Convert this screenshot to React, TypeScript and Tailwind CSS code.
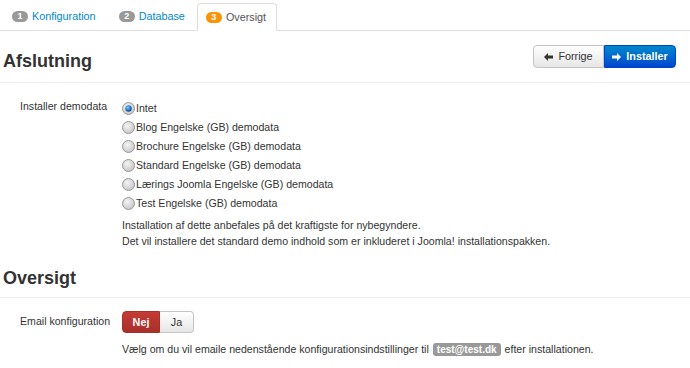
import React from "react";

const font = { fontFamily: '"Liberation Sans", Arial, sans-serif' };

function Radio({ checked }: { checked?: boolean }) {
  return (
    <svg width="13" height="13" viewBox="0 0 13 13" className="shrink-0">
      <defs>
        <radialGradient id={checked ? "rc" : "ru"} cx="0.4" cy="0.35" r="0.7">
          <stop offset="0" stopColor="#f4f4f4" />
          <stop offset="1" stopColor="#c4c4c4" />
        </radialGradient>
        <radialGradient id="dot" cx="0.4" cy="0.35" r="0.7">
          <stop offset="0" stopColor="#7fd0ff" />
          <stop offset="0.6" stopColor="#1f76c2" />
          <stop offset="1" stopColor="#0b3f7a" />
        </radialGradient>
      </defs>
      <circle cx="6.5" cy="6.5" r="6" fill={checked ? "url(#rc)" : "url(#ru)"} stroke="#999999" />
      {checked && <circle cx="6.5" cy="6.5" r="3.2" fill="url(#dot)" />}
    </svg>
  );
}

function Arrow({ dir, color }: { dir: "left" | "right"; color: string }) {
  return (
    <svg width="9" height="8" viewBox="0 0 9 8" className="shrink-0">
      {dir === "left" ? (
        <path d="M0 4 L4 0 L4 2.5 L9 2.5 L9 5.5 L4 5.5 L4 8 Z" fill={color} />
      ) : (
        <path d="M9 4 L5 0 L5 2.5 L0 2.5 L0 5.5 L5 5.5 L5 8 Z" fill={color} />
      )}
    </svg>
  );
}

function Tab({ n, label, active }: { n: number; label: string; active?: boolean }) {
  return (
    <div
      className={
        active
          ? "flex items-center gap-[4px] h-[28px] pl-[8px] pr-[10px] mr-[2px] -mb-px bg-white border border-[#ddd] border-b-white rounded-t-[4px]"
          : "flex items-center gap-[4px] h-[28px] px-[10px] mr-[1px] border border-transparent"
      }
    >
      <span
        className={
          "flex items-center justify-center w-[16px] h-[11px] rounded-full text-white text-[9px] font-bold leading-none " +
          (active ? "bg-[#f89406]" : "bg-[#999999]")
        }
      >
        {n}
      </span>
      <span className={"text-[10.8px] " + (active ? "text-[#555555]" : "text-[#0088cc]")}>{label}</span>
    </div>
  );
}

export default function App() {
  const options = [
    "Intet",
    "Blog Engelske (GB) demodata",
    "Brochure Engelske (GB) demodata",
    "Standard Engelske (GB) demodata",
    "Lærings Joomla Engelske (GB) demodata",
    "Test Engelske (GB) demodata",
  ];
  return (
    <div className="w-[690px] h-[368px] bg-white overflow-hidden text-[#333333]" style={font}>
      {/* Tabs */}
      <div className="flex items-end h-[31px] pl-[1px] border-b border-[#dddddd]">
        <Tab n={1} label="Konfiguration" />
        <Tab n={2} label="Database" />
        <Tab n={3} label="Oversigt" active />
      </div>

      {/* Afslutning header */}
      <div className="flex items-center justify-between h-[52px] pl-[3px] pr-[14px] border-b border-[#eeeeee]">
        <h1 className="mt-[8px] text-[18px] font-bold text-[#333333] leading-none">Afslutning</h1>
        <div className="flex">
          <button className="flex items-center gap-[5px] h-[23px] w-[71px] justify-center text-[10.8px] text-[#333333] bg-gradient-to-b from-white to-[#e6e6e6] border border-[#c5c5c5] rounded-l-[4px]">
            <Arrow dir="left" color="#333333" />
            Forrige
          </button>
          <button className="flex items-center gap-[5px] h-[23px] w-[72px] justify-center text-[10.8px] font-bold text-white bg-gradient-to-b from-[#0088cc] to-[#0044cc] border border-[#0044cc] rounded-r-[4px]">
            <Arrow dir="right" color="#ffffff" />
            Installer
          </button>
        </div>
      </div>

      {/* Demodata */}
      <div className="flex pt-[16px]">
        <div className="w-[122px] pl-[20px] text-[10.6px]">Installer demodata</div>
        <div className="flex flex-col">
          <div className="flex flex-col">
            {options.map((o, i) => (
              <div key={o} className="flex items-center h-[19px] text-[10.6px]">
                <Radio checked={i === 0} />
                <span className="ml-[1px]">{o}</span>
              </div>
            ))}
          </div>
          <div className="mt-[4px] text-[10.6px] leading-[16px]">
            <div>Installation af dette anbefales på det kraftigste for nybegyndere.</div>
            <div>Det vil installere det standard demo indhold som er inkluderet i Joomla! installationspakken.</div>
          </div>
        </div>
      </div>

      {/* Oversigt */}
      <div className="flex items-center h-[41px] pl-[3px] mt-[8px] border-b border-[#eeeeee]">
        <h2 className="mt-[1px] text-[18px] font-bold text-[#333333] leading-none">Oversigt</h2>
      </div>

      <div className="flex pt-[13px]">
        <div className="w-[122px] pl-[20px] text-[10.6px] pt-[3px]">Email konfiguration</div>
        <div className="flex flex-col">
          <div className="flex">
            <button className="h-[22px] w-[38px] text-[10.8px] font-bold text-white bg-gradient-to-b from-[#c43c35] to-[#a9302a] border border-[#a9302a] rounded-l-[4px]">
              Nej
            </button>
            <button className="h-[22px] w-[34px] text-[10.8px] text-[#333333] bg-gradient-to-b from-white to-[#e6e6e6] border border-[#c5c5c5] border-l-0 rounded-r-[4px]">
              Ja
            </button>
          </div>
          <div className="mt-[9px] text-[10.6px] flex items-center">
            Vælg om du vil emaile nedenstående konfigurationsindstillinger til
            <span className="mx-[4px] px-[4px] h-[13px] flex items-center rounded-[3px] bg-[#999999] text-white font-bold text-[10px]">
              test@test.dk
            </span>
            efter installationen.
          </div>
        </div>
      </div>
    </div>
  );
}
